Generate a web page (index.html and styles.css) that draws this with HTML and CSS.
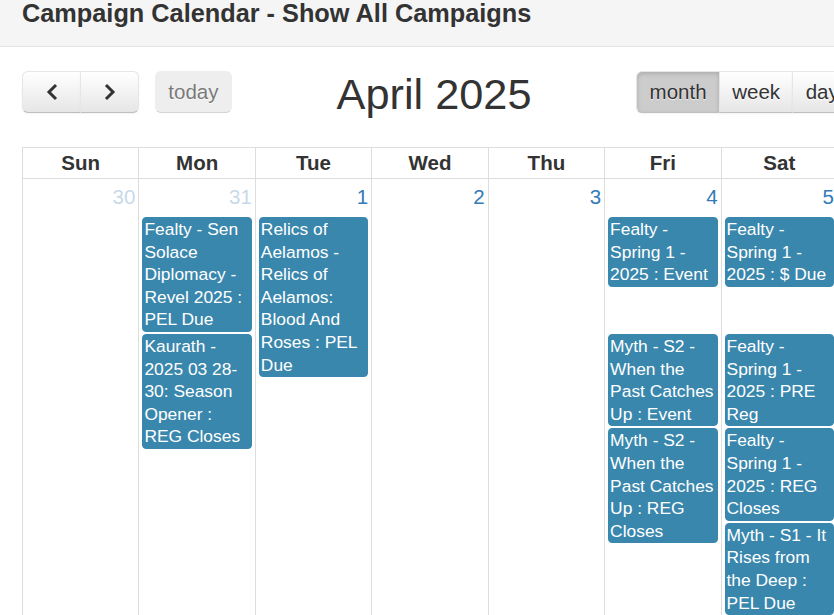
FILE: index.html
```html
<!DOCTYPE html>
<html lang="en">
  <head>
    <meta charset="UTF-8" />
    <title>Campaign Calendar</title>
    <link rel="stylesheet" href="styles.css">
  </head>
  <body>
    <!-- Page heading band -->
    <div class="page-header">
      <h1>Campaign Calendar - Show All Campaigns</h1>
    </div>

    <div class="calendar">
      <!-- Toolbar: navigation, title, view switcher -->
      <div class="toolbar">
        <div class="toolbar-left">
          <div class="button-group">
            <button class="cal-button icon-button" type="button" aria-label="prev">
              <svg width="12" height="18" viewBox="0 0 12 18">
                <polyline points="10,2 3,9 10,16" fill="none" stroke="#333" stroke-width="3" />
              </svg>
            </button>
            <button class="cal-button icon-button" type="button" aria-label="next">
              <svg width="12" height="18" viewBox="0 0 12 18">
                <polyline points="2,2 9,9 2,16" fill="none" stroke="#333" stroke-width="3" />
              </svg>
            </button>
          </div>
          <button class="cal-button is-disabled" type="button">today</button>
        </div>
        <div class="toolbar-center">
          <h2>April 2025</h2>
        </div>
        <div class="toolbar-right">
          <div class="button-group">
            <button class="cal-button is-active" type="button">month</button>
            <button class="cal-button" type="button">week</button>
            <button class="cal-button" type="button">day</button>
          </div>
        </div>
      </div>

      <!-- Month grid (first week) -->
      <table class="month-grid">
        <thead>
          <tr>
            <th>Sun</th>
            <th>Mon</th>
            <th>Tue</th>
            <th>Wed</th>
            <th>Thu</th>
            <th>Fri</th>
            <th>Sat</th>
          </tr>
        </thead>
        <tbody>
          <tr class="day-numbers">
            <td class="other-month">30</td>
            <td class="other-month">31</td>
            <td>1</td>
            <td>2</td>
            <td>3</td>
            <td>4</td>
            <td>5</td>
          </tr>
          <tr>
            <td rowspan="4"></td>
            <td><a class="event">Fealty - Sen Solace Diplomacy - Revel 2025 : PEL Due</a></td>
            <td rowspan="4"><a class="event">Relics of Aelamos - Relics of Aelamos: Blood And Roses : PEL Due</a></td>
            <td rowspan="4"></td>
            <td rowspan="4"></td>
            <td><a class="event">Fealty - Spring 1 - 2025 : Event</a></td>
            <td><a class="event">Fealty - Spring 1 - 2025 : $ Due</a></td>
          </tr>
          <tr>
            <td rowspan="3"><a class="event">Kaurath - 2025 03 28-30: Season Opener : REG Closes</a></td>
            <td><a class="event">Myth - S2 - When the Past Catches Up : Event</a></td>
            <td><a class="event">Fealty - Spring 1 - 2025 : PRE Reg</a></td>
          </tr>
          <tr>
            <td rowspan="2"><a class="event">Myth - S2 - When the Past Catches Up : REG Closes</a></td>
            <td><a class="event">Fealty - Spring 1 - 2025 : REG Closes</a></td>
          </tr>
          <tr>
            <td><a class="event">Myth - S1 - It Rises from the Deep : PEL Due</a></td>
          </tr>
          <tr class="filler">
            <td></td>
            <td></td>
            <td></td>
            <td></td>
            <td></td>
            <td></td>
            <td></td>
          </tr>
        </tbody>
      </table>
    </div>
  </body>
</html>
```

FILE: styles.css
```css
/* Reset */
* {
  box-sizing: border-box;
}

html,
body {
  overflow: hidden;
}

body {
  margin: 0;
  font-family: "Liberation Sans", Arial, sans-serif;
  font-size: 20.5px;
  color: #333;
  background: #fff;
}

/* Heading band */
.page-header {
  background-color: #f5f5f5;
  border-bottom: 1px solid #e3e3e3;
  height: 47px;
  padding: 1px 22px 0;
}

.page-header h1 {
  margin: 0;
  font-size: 25.3px;
  line-height: 25.3px;
  font-weight: bold;
  color: #333;
  white-space: nowrap;
}

.calendar {
  margin: 24px 0 0 22px;
  width: 830px;
}

/* Toolbar */
.toolbar {
  display: flex;
  align-items: flex-start;
  height: 48px;
  margin-bottom: 28px;
}

.toolbar-left {
  display: flex;
  gap: 16px;
}

.toolbar-center {
  flex: 1;
  text-align: center;
}

.toolbar-center h2 {
  margin: 0;
  font-size: 43.3px;
  line-height: 1.1;
  font-weight: normal;
  color: #333;
}

.button-group {
  display: flex;
}

.cal-button {
  height: 42px;
  padding: 0 12.3px;
  font-family: inherit;
  font-size: 20.5px;
  color: #333;
  background-color: #f5f5f5;
  background-image: linear-gradient(to bottom, #fff, #e6e6e6);
  border: 1px solid;
  border-color: #e6e6e6 #e6e6e6 #bfbfbf;
  border-radius: 6px;
  text-shadow: 0 1px 1px rgba(255, 255, 255, 0.75);
  box-shadow: inset 0 1px 0 rgba(255, 255, 255, 0.2), 0 1px 2px rgba(0, 0, 0, 0.05);
  cursor: pointer;
}

.button-group .cal-button {
  border-radius: 0;
}

.button-group .cal-button + .cal-button {
  margin-left: -1px;
}

.button-group .cal-button:first-child {
  border-radius: 6px 0 0 6px;
}

.button-group .cal-button:last-child {
  border-radius: 0 6px 6px 0;
}

.icon-button {
  width: 59px;
  display: flex;
  align-items: center;
  justify-content: center;
}

.cal-button.is-active {
  background-color: #ccc;
  background-image: none;
  box-shadow: inset 0 2px 4px rgba(0, 0, 0, 0.15), 0 1px 2px rgba(0, 0, 0, 0.05);
}

.cal-button.is-disabled {
  background-color: #e6e6e6;
  background-image: none;
  box-shadow: none;
  opacity: 0.65;
  cursor: default;
}

/* Month grid */
.month-grid {
  width: 816px;
  border-collapse: collapse;
  table-layout: fixed;
}

.month-grid th {
  border: 1px solid #ddd;
  line-height: 30px;
  padding: 0;
  font-weight: bold;
  text-align: center;
}

.month-grid td {
  border-left: 1px solid #ddd;
  border-right: 1px solid #ddd;
  padding: 0;
  vertical-align: top;
}

.day-numbers td {
  padding: 3px;
  line-height: 30px;
  text-align: right;
  color: #337ab7;
}

.day-numbers td.other-month {
  color: rgba(51, 122, 183, 0.3);
}

.filler td {
  height: 120px;
}

.event {
  display: block;
  margin: 2px 3px 0;
  padding: 0 1px;
  background-color: #3a87ad;
  border: 1px solid #3a87ad;
  border-radius: 4px;
  color: #fff;
  font-size: 17.4px;
  line-height: 22.6px;
  text-decoration: none;
}
```
